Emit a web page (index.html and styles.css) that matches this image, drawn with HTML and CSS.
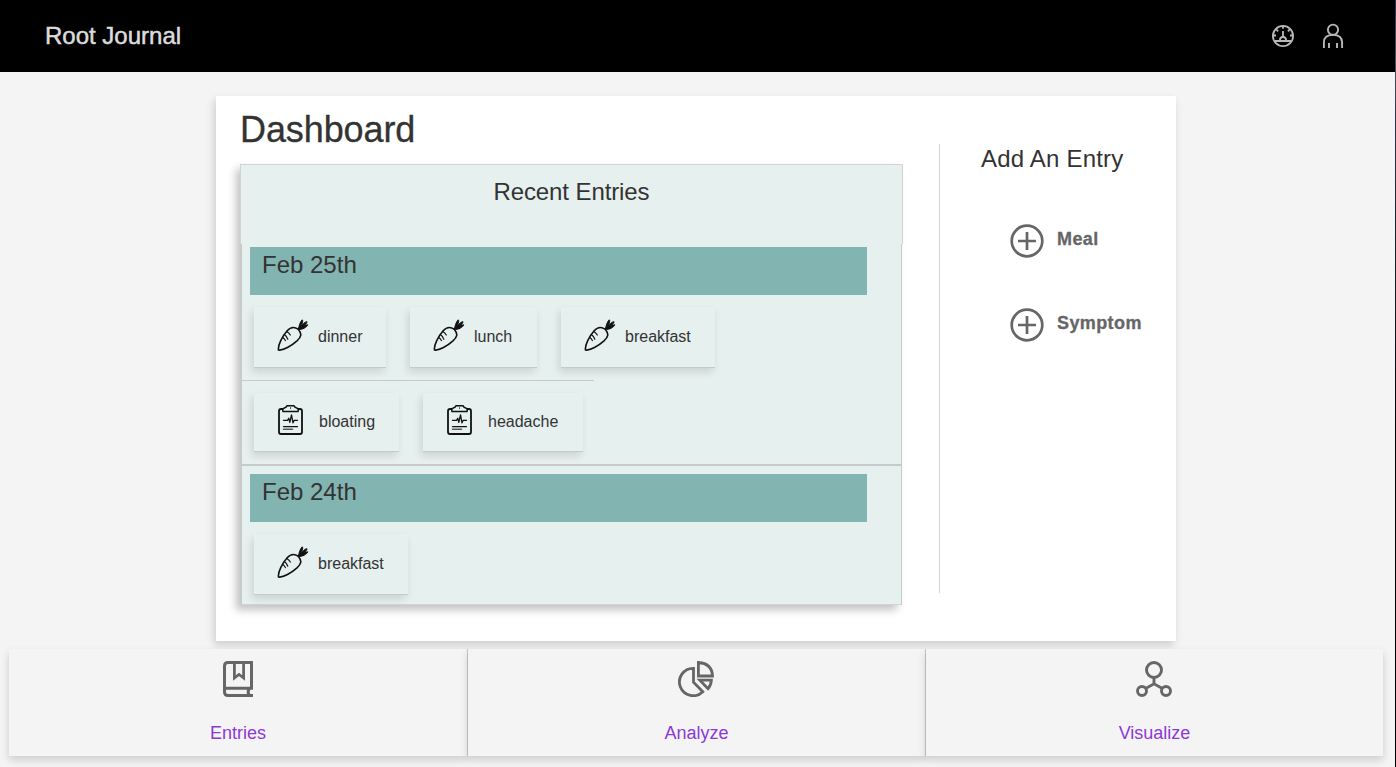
FILE: index.html
```
<!DOCTYPE html>
<html lang="en">
<head>
<meta charset="utf-8">
<title>Root Journal</title>
<link rel="stylesheet" href="styles.css">
</head>
<body>
<svg class="defs" width="0" height="0">
  <symbol id="carrot" viewBox="0 0 32 32">
    <g fill="none" stroke="#111" stroke-width="1.6" stroke-linecap="round" stroke-linejoin="round">
      <path d="M1.5 31C.6 26.5 5.5 17 10.2 11.8C13.5 8 17 7.4 21.2 10.2C25.3 15 24.2 17.8 20 21.8C14.7 26.5 6 32 1.5 31Z"/>
      <path d="M5.8 18.4q1.8 1.2 2.6 3.2M7.3 15.6q2.6 1.8 3.5 4.6M9.9 12.4q2.2 1.5 3.4 3.6" stroke-width="1.2"/>
      <path d="M21.4 10.2C22 7 23 3 25.2 .8C26.5 2 25.2 6 22.4 9.5C25 5.5 28.2 2.6 30 2.7C30.2 4.5 26 8 22.8 10.2C26 7.8 29.4 5.5 30.8 5.8C30 8.2 25 11.2 21.4 10.2Z" fill="#111" stroke-width="1"/>
    </g>
  </symbol>
  <symbol id="clipboard" viewBox="0 0 32 32">
    <g fill="none" stroke="#111" stroke-width="1.8" stroke-linecap="round" stroke-linejoin="round">
      <path d="M5.5 5H4Q2 5 2 7V28Q2 30 4 30H23Q25 30 25 28V7Q25 5 23 5H21.5"/>
      <path d="M6 7.6L5.5 5L9 3.2L10 1.8H17L18 3.2L21.5 5L21 7.6Z" stroke-width="1.5"/>
      <path d="M13.5 3.8v.5" stroke-width="1"/>
      <path d="M6.5 16.3h4l1.3-2 1 4 1.7-7.5 1.5 8 1.2-2.5h3.3M6.5 22.6h14" stroke-width="1.3"/>
      <path d="M6.5 25.3h9" stroke-width="1.5" stroke="#555"/>
    </g>
  </symbol>
  <symbol id="plus" viewBox="0 0 34 34">
    <g fill="none" stroke="#666" stroke-width="2.7"><circle cx="17" cy="17" r="15.3"/><path d="M17 8v18M8 17h18"/></g>
  </symbol>
</svg>

<header class="topbar">
  <div class="brand">Root Journal</div>
  <div class="tools">
    <svg width="24" height="24" viewBox="0 0 24 24" fill="none" stroke="#b8b8b8" stroke-width="1.8">
      <circle cx="12" cy="12" r="10.1"/>
      <path d="M3.7 17h5.4M14.9 17h5.4M12 7v6M12 2v2.7M2 11.5h3M19 11.5h3M5.2 5.4l1.9 1.9M18.8 5.4l-1.9 1.9"/>
      <path d="M8.8 17c0-2.4 1.2-4 3.2-4s3.2 1.6 3.2 4z"/>
    </svg>
    <svg width="24" height="26" viewBox="0 0 24 26" fill="none" stroke="#b8b8b8" stroke-width="1.9">
      <circle cx="12" cy="6.7" r="5.1"/>
      <path d="M2.9 25v-5.5Q2.9 11.9 12 11.9T21.1 19.5V25M8 20v5M16 20v5"/>
    </svg>
  </div>
</header>

<main class="card">
  <section class="left">
    <h1>Dashboard</h1>
    <div class="panel">
      <h2>Recent Entries</h2>
      <article class="day">
        <h3><span>Feb 25th</span></h3>
        <div class="row">
          <div class="item w-dinner"><svg><use href="#carrot"/></svg><span>dinner</span></div>
          <div class="item w-lunch"><svg><use href="#carrot"/></svg><span>lunch</span></div>
          <div class="item w-breakfast"><svg><use href="#carrot"/></svg><span>breakfast</span></div>
        </div>
        <div class="row symptoms">
          <div class="item w-bloating"><svg><use href="#clipboard"/></svg><span>bloating</span></div>
          <div class="item w-headache"><svg><use href="#clipboard"/></svg><span>headache</span></div>
        </div>
      </article>
      <article class="day last">
        <h3><span>Feb 24th</span></h3>
        <div class="row">
          <div class="item w-breakfast"><svg><use href="#carrot"/></svg><span>breakfast</span></div>
        </div>
      </article>
    </div>
  </section>
  <aside class="add">
    <h2>Add An Entry</h2>
    <a class="action"><svg width="34" height="34"><use href="#plus"/></svg><span class="meal">Meal</span></a>
    <a class="action"><svg width="34" height="34"><use href="#plus"/></svg><span class="symptom">Symptom</span></a>
  </aside>
</main>

<nav class="tabs">
  <a>
    <svg width="36" height="36" viewBox="0 0 36 36" fill="none" stroke="#666" stroke-width="3">
      <path d="M33 27.3H6Q4.5 27.3 4.5 30.5M33 34.5H8Q4.5 34.5 4.5 31V5Q4.5 1.5 8 1.5H31.5V28M29.3 27.5Q27 31 29.3 34.5"/>
      <path d="M14.4 2v15l4.6-3.5 4.6 3.5V2" stroke-width="2.8"/>
    </svg>
    <span>Entries</span>
  </a>
  <a>
    <svg class="nudge" width="36" height="36" viewBox="0 0 36 36" fill="none" stroke="#666" stroke-width="2.8">
      <path d="M15.5 7.3A13.7 13.7 0 1 0 24.8 30.7L15.5 21.2Z"/>
      <path d="M20.4 1.5V15H34.5Q34 2.5 20.4 1.5Z"/>
      <path d="M21.8 19.2H33.4Q33 24.5 30 27.8Z"/>
    </svg>
    <span>Analyze</span>
  </a>
  <a>
    <svg class="nudge" width="36" height="36" viewBox="0 0 36 36" fill="none" stroke="#666" stroke-width="2.9">
      <circle cx="18" cy="9" r="7.5"/><circle cx="6" cy="30" r="4.5"/><circle cx="30" cy="30" r="4.5"/>
      <path d="M18 16.5v6.3M10 27.3l8-4.5 8 4.5"/>
    </svg>
    <span>Visualize</span>
  </a>
</nav>
</body>
</html>
```
FILE: styles.css
```
* { box-sizing: border-box; }
body {
  margin: 0;
  height: 767px;
  overflow: hidden;
  background: linear-gradient(#26324d, #4a5262 8%, #26324d 16%, #000 55%) right / 1px 100% no-repeat, #f4f4f4;
  padding-right: 1px;
  font-family: "Liberation Sans", Arial, sans-serif;
  color: #333;
}
.defs { position: absolute; }
h1, h2, h3 { margin: 0; font-weight: 400; white-space: nowrap; }
svg { display: block; flex: none; }

.topbar {
  height: 72px;
  background: #000;
  display: flex;
  align-items: center;
  justify-content: space-between;
  padding: 0 50px 0 45px;
}
.brand { color: #dcdcdc; font-size: 24px; line-height: 28px; -webkit-text-stroke: .5px #dcdcdc; }
.tools { display: flex; align-items: center; gap: 26px; }

.card {
  width: 960px;
  height: 545px;
  margin: 24px 0 0 216px;
  background: #fff;
  box-shadow: -2px 4px 8px rgba(0, 0, 0, .16);
  display: flex;
}
.left { width: 723px; padding: 11px 36px 0 24px; }
h1 { font-size: 36px; line-height: 45px; height: 57px; letter-spacing: -.1px; -webkit-text-stroke: .3px #333; }
.panel {
  height: 441px;
  margin: 0 1px;
  background: #e6f0ee;
  box-shadow: -5px 5px 8px rgba(0, 0, 0, .24);
}
.panel h2 {
  height: 80px;
  margin: 0 -1px;
  border: 1px solid #d3d3d3;
  border-bottom: 0;
  background: #e6f0ee;
  text-align: center;
  font-size: 24px;
  line-height: 53px;
  letter-spacing: -.1px;
}
.day { height: 221px; border: 1px solid #c4cbca; border-top: 0; padding: 3px 0 0; }
.day.last { height: 140px; padding-top: 8px; border-top: 1px solid #c4cbca; border-bottom-color: #d3d3d3; }
h3 {
  width: 617px;
  height: 48px;
  margin-left: 8px;
  padding-left: 12px;
  background: #82b5b2;
  font-size: 24px;
  line-height: 35px;
}
.row { display: flex; gap: 24px; padding: 12px 0 0 12px; }
.symptoms { width: 352px; margin-top: 12px; border-top: 1px solid #c4cbca; }
.item {
  height: 61px;
  display: flex;
  align-items: center;
  gap: 9px;
  padding-left: 23px;
  border-bottom: 1px solid #c4cbca;
  box-shadow: -2px 4px 8px rgba(0, 0, 0, .12);
  background: #e6f0ee;
  font-size: 16px;
  line-height: 20px;
}
.item svg { width: 32px; height: 32px; margin-top: -4px; }
.symptoms .item { height: 59px; }
.symptoms .item span { margin-left: 1px; }
.w-dinner { width: 132px; }
.w-lunch { width: 127px; }
.w-breakfast { width: 154px; }
.w-bloating { width: 145px; }
.w-headache { width: 160px; }

.add { width: 237px; height: 449px; margin-top: 48px; border-left: 1px solid #d3d3d3; }
.add h2 { font-size: 24px; line-height: 30px; height: 80px; padding-left: 41px; letter-spacing: .2px; }
.action {
  height: 84px;
  padding-left: 70px;
  display: flex;
  align-items: flex-start;
  gap: 13px;
  font-size: 18px;
  font-weight: 700;
  line-height: 31px;
  letter-spacing: .4px;
  color: #666;
  -webkit-text-stroke: .3px #666;
}

.tabs {
  display: grid;
  grid-template-columns: 459px 458px 457px;
  height: 107px;
  margin: 8px 0 0 9px;
}
.tabs a {
  display: flex;
  flex-direction: column;
  align-items: center;
  gap: 26px;
  padding-top: 12px;
  background: #f4f4f4;
  border-right: 1px solid #c6c6c6;
  box-shadow: 0 4px 8px rgba(0, 0, 0, .16);
  color: #8d38d8;
  font-size: 18px;
  line-height: 20px;
}
.tabs a:last-child { border-right: 0; }
.nudge { margin-right: 2px; }
```
